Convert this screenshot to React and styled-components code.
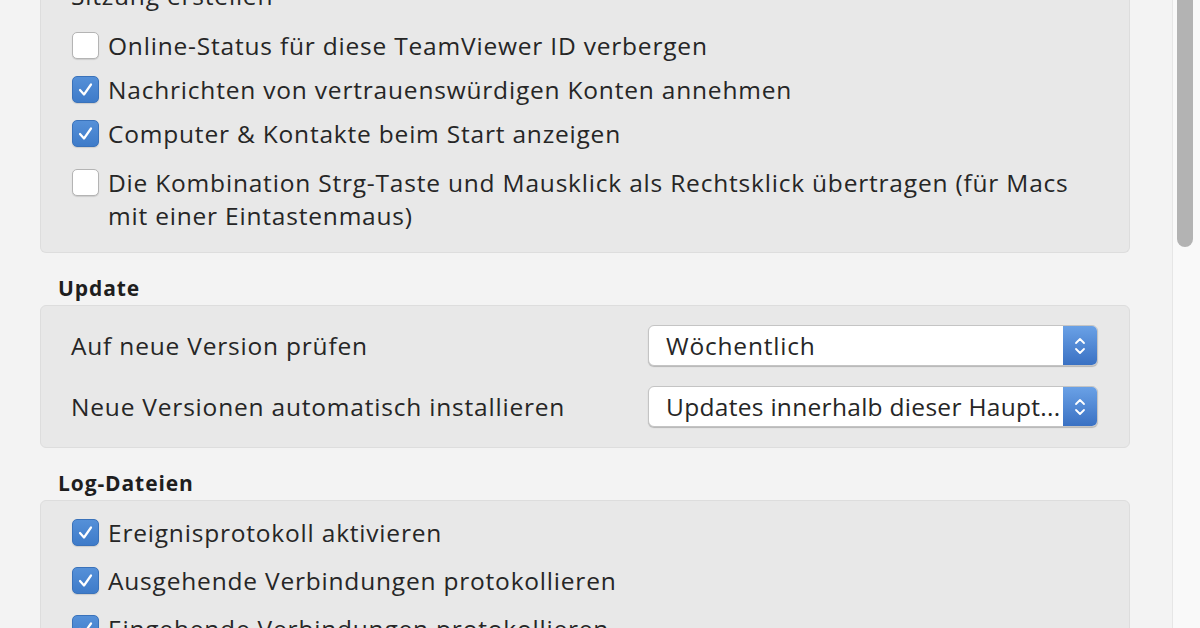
import React from "react";
import styled, { createGlobalStyle } from "styled-components";

const Global = createGlobalStyle`
  html, body { margin: 0; padding: 0; background: #f3f3f3; }
  body { font-family: "Open Sans", "Liberation Sans", Arial, sans-serif; color: #262626; }
`;

const Window = styled.div`
  width: 1200px;
  height: 628px;
  overflow: hidden;
  display: flex;
  background: #f3f3f3;
`;

const Content = styled.div`
  flex: 1;
  display: flex;
  flex-direction: column;
  padding-left: 40px;
  padding-right: 42px;
  margin-top: -21px;
`;

const Panel = styled.div`
  background: #e8e8e8;
  border: 1px solid #dddddd;
  border-radius: 6px;
  display: flex;
  flex-direction: column;
  gap: ${(p) => p.$gap || 11}px;
  padding: ${(p) => p.$pad || "20px 30px 20px 31px"};
`;

const TopPanel = styled(Panel)`
  border-top: none;
  border-top-left-radius: 0;
  border-top-right-radius: 0;
`;

const SubHeading = styled.div`
  font-size: 24.5px;
  line-height: 33px;
  letter-spacing: 0.8px;
  margin-left: -1px;
  margin-bottom: 6px;
`;

const SectionTitle = styled.div`
  font-size: 21px;
  font-weight: bold;
  line-height: 26px;
  letter-spacing: 0.9px;
  color: #1e1e1e;
  padding: 22px 0 4px 18px;
`;

const Row = styled.label`
  display: flex;
  align-items: flex-start;
  gap: 9px;
  font-size: 24.5px;
  line-height: 33px;
  letter-spacing: 0.8px;
  margin-top: ${(p) => p.$extra || 0}px;
`;

const Box = styled.span`
  flex: none;
  width: 27px;
  height: 27px;
  margin-top: 3px;
  box-sizing: border-box;
  border-radius: 5px;
  display: flex;
  align-items: center;
  justify-content: center;
  background: ${(p) => (p.$checked ? "linear-gradient(#5590d8, #3e7bc9)" : "#ffffff")};
  border: 1px solid ${(p) => (p.$checked ? "#3a72ba" : "#b4b4b4")};
  box-shadow: 0 1px 1px rgba(0, 0, 0, 0.12);
`;

const FieldRow = styled.div`
  display: flex;
  align-items: center;
  justify-content: space-between;
  font-size: 24.5px;
  letter-spacing: 0.8px;
  height: 41px;
`;

const Select = styled.div`
  width: 450px;
  height: 41px;
  box-sizing: border-box;
  display: flex;
  background: #ffffff;
  border: 1px solid #c4c4c4;
  border-radius: 6px;
  box-shadow: 0 1px 1px rgba(0, 0, 0, 0.22);
  overflow: hidden;
`;

const SelectText = styled.span`
  flex: 1;
  padding-left: 17px;
  font-size: 24.5px;
  line-height: 39px;
  letter-spacing: ${(p) => (p.$tight ? "0.3px" : "0.8px")};
  white-space: nowrap;
  overflow: hidden;
`;

const Stepper = styled.span`
  flex: none;
  width: 34px;
  display: flex;
  align-items: center;
  justify-content: center;
  background: linear-gradient(#6aa1e6, #3a71c3);
`;

const ScrollTrack = styled.div`
  flex: none;
  width: 23px;
  background: #f9f9f9;
  border-left: 1px solid #e6e6e6;
  padding-left: 4px;
`;

const Thumb = styled.div`
  width: 16px;
  height: 247px;
  background: #b3b3b3;
  border-radius: 0 0 8px 8px;
`;

const Check = () => (
  <svg width="19" height="19" viewBox="0 0 19 19" fill="none">
    <path d="M4 10 L8 14.5 L15 4.5" stroke="#fff" strokeWidth="2.2" strokeLinecap="round" strokeLinejoin="round" />
  </svg>
);

const Chevrons = () => (
  <svg width="14" height="24" viewBox="0 0 14 24" fill="none">
    <path d="M3 9 L7 5 L11 9" stroke="#fff" strokeWidth="1.8" strokeLinecap="round" strokeLinejoin="round" />
    <path d="M3 15 L7 19 L11 15" stroke="#fff" strokeWidth="1.8" strokeLinecap="round" strokeLinejoin="round" />
  </svg>
);

const CheckRow = ({ checked, children, extra }) => (
  <Row $extra={extra}>
    <Box $checked={checked}>{checked && <Check />}</Box>
    <span>{children}</span>
  </Row>
);

export default function App() {
  return (
    <Window>
      <Global />
      <Content>
        <TopPanel $pad="0 30px 20px 31px">
          <SubHeading>Sitzung erstellen</SubHeading>
          <CheckRow>Online-Status für diese TeamViewer ID verbergen</CheckRow>
          <CheckRow checked>Nachrichten von vertrauenswürdigen Konten annehmen</CheckRow>
          <CheckRow checked>Computer &amp; Kontakte beim Start anzeigen</CheckRow>
          <CheckRow extra={5}>
            Die Kombination Strg-Taste und Mausklick als Rechtsklick übertragen (für Macs mit einer Eintastenmaus)
          </CheckRow>
        </TopPanel>

        <SectionTitle>Update</SectionTitle>
        <Panel $gap={20} $pad="19px 31px 20px 30px">
          <FieldRow>
            <span>Auf neue Version prüfen</span>
            <Select>
              <SelectText>Wöchentlich</SelectText>
              <Stepper><Chevrons /></Stepper>
            </Select>
          </FieldRow>
          <FieldRow>
            <span>Neue Versionen automatisch installieren</span>
            <Select>
              <SelectText $tight>Updates innerhalb dieser Haupt...</SelectText>
              <Stepper><Chevrons /></Stepper>
            </Select>
          </FieldRow>
        </Panel>

        <SectionTitle>Log-Dateien</SectionTitle>
        <Panel $gap={15} $pad="15px 30px 20px 31px">
          <CheckRow checked>Ereignisprotokoll aktivieren</CheckRow>
          <CheckRow checked>Ausgehende Verbindungen protokollieren</CheckRow>
          <CheckRow checked>Eingehende Verbindungen protokollieren</CheckRow>
        </Panel>
      </Content>
      <ScrollTrack>
        <Thumb />
      </ScrollTrack>
    </Window>
  );
}
